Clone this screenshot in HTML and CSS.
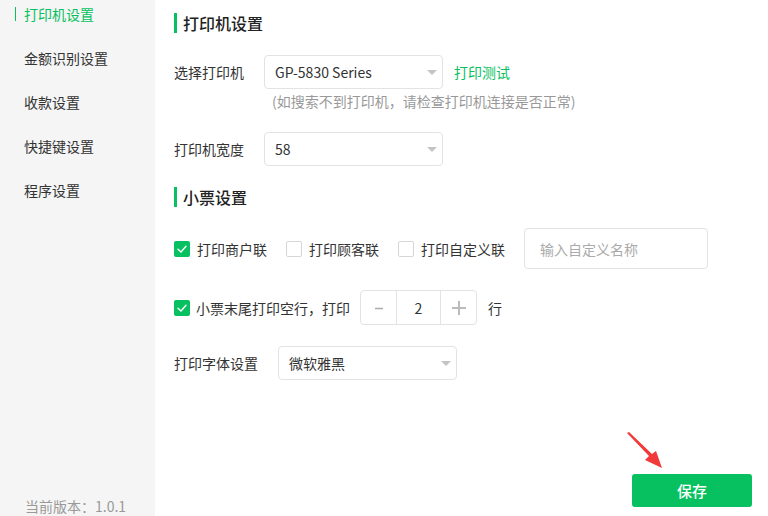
FILE: index.html
```html
<!DOCTYPE html>
<html lang="zh-CN">
<head>
    <meta charset="UTF-8">
    <title>打印机设置</title>
    <link rel="stylesheet" href="styles.css">
</head>
<body>
    <div class="app">
        <div class="sidebar">
            <div class="menu">
                <div class="menu-item active">打印机设置</div>
                <div class="menu-item">金额识别设置</div>
                <div class="menu-item">收款设置</div>
                <div class="menu-item">快捷键设置</div>
                <div class="menu-item">程序设置</div>
            </div>
            <div class="version">当前版本：1.0.1</div>
        </div>

        <div class="main">
            <div class="section-title">打印机设置</div>

            <div class="form-row first">
                <span class="label">选择打印机</span>
                <div class="select"><span>GP-5830 Series</span><i class="caret"></i></div>
                <a class="link">打印测试</a>
            </div>
            <div class="hint">(如搜索不到打印机，请检查打印机连接是否正常)</div>

            <div class="form-row">
                <span class="label">打印机宽度</span>
                <div class="select"><span>58</span><i class="caret"></i></div>
            </div>

            <div class="section-title second">小票设置</div>

            <div class="form-row checks">
                <label class="check"><span class="box on"><svg viewBox="0 0 16 16" width="16" height="16"><polyline points="4,8.2 7,11 12,5.2" fill="none" stroke="#fff" stroke-width="1.4" stroke-linecap="round" stroke-linejoin="round"/></svg></span>打印商户联</label>
                <label class="check"><span class="box"></span>打印顾客联</label>
                <label class="check"><span class="box"></span>打印自定义联</label>
                <input class="text-input" type="text" placeholder="输入自定义名称">
            </div>

            <div class="form-row">
                <label class="check tight"><span class="box on"><svg viewBox="0 0 16 16" width="16" height="16"><polyline points="4,8.2 7,11 12,5.2" fill="none" stroke="#fff" stroke-width="1.4" stroke-linecap="round" stroke-linejoin="round"/></svg></span>小票末尾打印空行，打印</label>
                <div class="stepper">
                    <span class="step"><svg width="16" height="16" viewBox="0 0 16 16"><line x1="4" y1="8.5" x2="12" y2="8.5" stroke="#aaa" stroke-width="1.5"/></svg></span>
                    <span class="step-value">2</span>
                    <span class="step"><svg width="16" height="16" viewBox="0 0 16 16"><line x1="1" y1="8" x2="15" y2="8" stroke="#bbb" stroke-width="2"/><line x1="8" y1="1" x2="8" y2="15" stroke="#bbb" stroke-width="2"/></svg></span>
                </div>
                <span class="unit">行</span>
            </div>

            <div class="form-row">
                <span class="label">打印字体设置</span>
                <div class="select"><span>微软雅黑</span><i class="caret"></i></div>
            </div>

            <button class="save">保存</button>

            <svg class="arrow" width="40" height="40" viewBox="0 0 40 40">
                <polygon points="1,1 23,24 19,28 36,36 30,19 26,22 3,0" fill="#f23a3a"/>
            </svg>
        </div>
    </div>
</body>
</html>
```

FILE: styles.css
```css
* {
    box-sizing: border-box;
}
html, body {
    margin: 0;
    height: 100%;
}
body {
    font-family: "Noto Sans CJK SC", "Microsoft YaHei", sans-serif;
    font-size: 14px;
    color: #333;
    background: #fff;
    overflow: hidden;
}
.app {
    display: flex;
    height: 516px;
}
.sidebar {
    width: 155px;
    background: #f5f5f5;
    display: flex;
    flex-direction: column;
    justify-content: space-between;
}
.menu {
    display: flex;
    flex-direction: column;
    gap: 14px;
}
.menu-item {
    position: relative;
    height: 30px;
    line-height: 29px;
    padding-left: 24px;
    color: #333;
}
.menu-item.active {
    color: #07c160;
}
.menu-item.active::before {
    content: "";
    position: absolute;
    left: 15px;
    top: 7px;
    width: 1px;
    height: 14px;
    background: #07c160;
}
.version {
    padding-left: 25px;
    color: #999;
    line-height: 20px;
    margin-bottom: 0;
}
.main {
    position: relative;
    flex: 1;
    display: flex;
    flex-direction: column;
    padding-left: 19px;
}
.section-title {
    margin-top: 13px;
    border-left: 3px solid #07c160;
    padding-left: 6px;
    line-height: 20px;
    font-size: 16px;
    font-weight: 500;
    color: #222;
}
.section-title.second {
    margin-top: 21px;
}
.form-row {
    display: flex;
    align-items: center;
    margin-top: 21px;
}
.form-row.first {
    margin-top: 22px;
}
.label {
    margin-right: 20px;
}
.select {
    width: 179px;
    height: 34px;
    border: 1px solid #e3e3e3;
    border-radius: 4px;
    display: flex;
    align-items: center;
    justify-content: space-between;
    padding: 0 5px 0 10px;
}
.caret {
    width: 0;
    height: 0;
    border-left: 5px solid transparent;
    border-right: 5px solid transparent;
    border-top: 5px solid #c4c4c4;
}
.link {
    margin-left: 11px;
    color: #07c160;
}
.hint {
    margin-left: 98px;
    line-height: 20px;
    margin-top: 2px;
    color: #999;
}
.check {
    display: flex;
    align-items: center;
    margin-right: 19px;
}
.check.tight {
    margin-right: 10px;
}
.box {
    width: 16px;
    height: 16px;
    border: 1px solid #d6d6d6;
    border-radius: 2px;
    background: #fff;
    margin-right: 7px;
    display: flex;
}
.check.tight .box {
    margin-right: 6px;
}
.box.on {
    border: none;
    background: #07c160;
}
.text-input {
    width: 184px;
    height: 41px;
    border: 1px solid #e3e3e3;
    border-radius: 4px;
    padding: 0 15px;
    font-family: inherit;
    font-size: 14px;
    color: #333;
    outline: none;
}
.text-input::placeholder {
    color: #aaa;
}
.stepper {
    display: flex;
    width: 117px;
    height: 35px;
    border: 1px solid #e3e3e3;
    border-radius: 4px;
}
.step {
    width: 35px;
    display: flex;
    align-items: center;
    justify-content: center;
}
.step-value {
    flex: 1;
    display: flex;
    align-items: center;
    justify-content: center;
    border-left: 1px solid #e3e3e3;
    border-right: 1px solid #e3e3e3;
}
.unit {
    margin-left: 11px;
}
.save {
    margin-top: auto;
    align-self: flex-end;
    margin-right: 16px;
    margin-bottom: 9px;
    width: 120px;
    height: 33px;
    border: none;
    border-radius: 3px;
    background: #07c160;
    color: #fff;
    font-family: inherit;
    font-size: 15px;
    font-weight: 500;
}
.arrow {
    position: absolute;
    left: 471px;
    top: 432px;
}
```
